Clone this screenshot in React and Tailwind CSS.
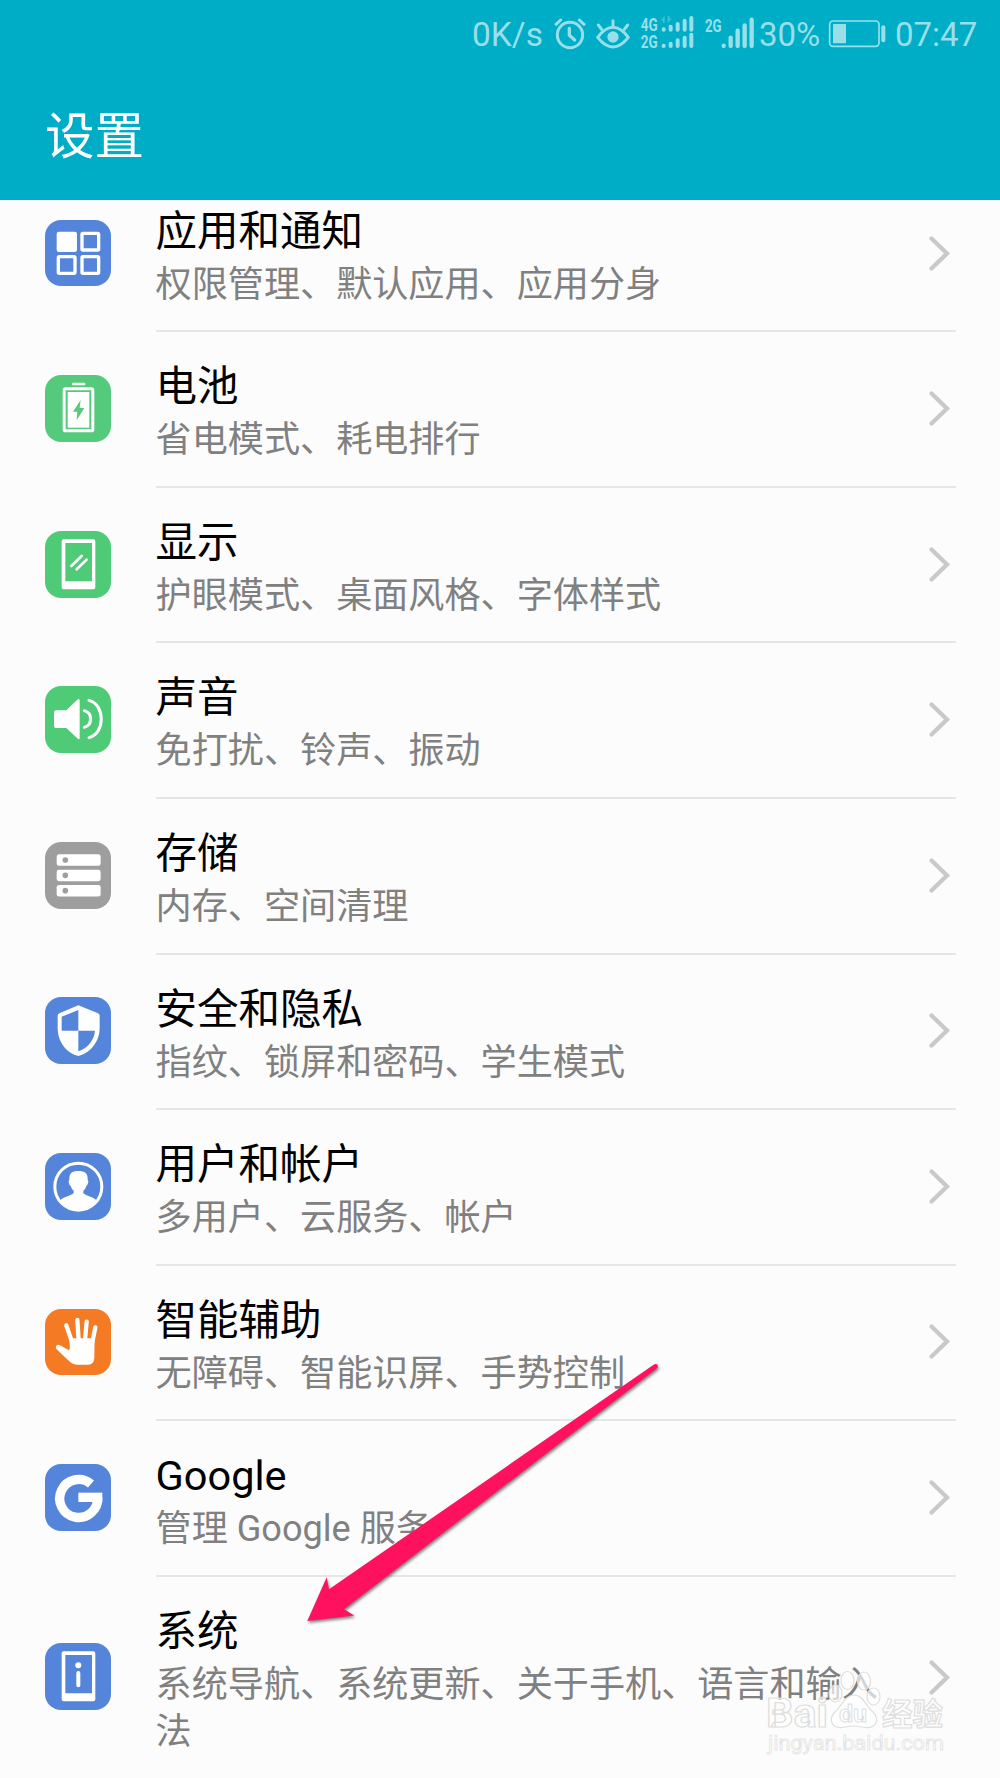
import { clsx } from 'clsx';

function AppsIcon() {
  return (
    <g fill="none" stroke="#fff" strokeWidth="10">
      <rect x="35" y="35" width="61" height="61" rx="7" fill="#fff" stroke="none" />
      <rect x="111" y="40" width="50" height="50" rx="3" />
      <rect x="40" y="110" width="50" height="50" rx="3" />
      <rect x="111" y="110" width="50" height="50" rx="3" />
    </g>
  );
}

function BatteryIcon() {
  return (
    <g>
      <rect x="81" y="23" width="40" height="8" rx="3" fill="#fff" />
      <rect x="57.5" y="41.5" width="86" height="126" rx="5" fill="none" stroke="#fff" strokeWidth="9" />
      <rect x="68" y="51" width="65" height="107" fill="#fff" />
      <path d="M107 75L84 110H97L95 136L118 99H104Z" fill="#56ca7c" />
    </g>
  );
}

function DisplayIcon() {
  return (
    <g>
      <path fill="#fff" fillRule="evenodd" d="M56 25H145Q151 25 151 31V169Q151 175 145 175H56Q50 175 50 169V31Q50 25 56 25ZM61 36V151H141V36Z" />
      <path d="M79 105L110 75M95 115L125 86" stroke="#fff" strokeWidth="8" strokeLinecap="round" />
    </g>
  );
}

function SoundIcon() {
  return (
    <g>
      <path fill="#fff" d="M33 73H64L97 41Q104 36 104 44V155Q104 163 97 157L64 126H33Q27 126 27 120V79Q27 73 33 73Z" />
      <path d="M118 74C143 81 143 117 118 124M132 43C181 56 181 142 132 155" fill="none" stroke="#fff" strokeWidth="9" strokeLinecap="round" />
    </g>
  );
}

function StorageIcon() {
  return (
    <g>
      {[37, 83, 129].map((y) => (
        <g key={y}>
          <rect x="35" y={y} width="132" height="34.5" rx="7" fill="#fff" />
          <circle cx="61" cy={y + 17} r="8.5" fill="#9e9e9e" />
        </g>
      ))}
    </g>
  );
}

function SecurityIcon() {
  return (
    <g>
      <path fill="#fff" d="M100 25L159 49Q164 51 164 56V93C164 134 136 168 100 177C64 168 38 134 38 93V56Q38 51 43 49Z" />
      <path fill="#5585db" d="M100 39V101H50V59ZM100 101H150C148 129 128 154 100 163Z" />
    </g>
  );
}

function UserIcon() {
  return (
    <g>
      <circle cx="100" cy="101" r="70.5" fill="none" stroke="#fff" strokeWidth="9" />
      <path fill="#fff" d="M100 54C119 54 129 60 128 80Q132 84 129 91Q127 98 124 99Q121 109 115 113V121Q119 125 130 129Q148 135 155 142Q136 172 100 174Q64 172 45 142Q52 135 70 129Q82 125 86 121V113Q80 109 77 99Q73 98 72 91Q69 84 73 80C72 60 82 54 100 54Z" />
    </g>
  );
}

function AssistIcon() {
  return (
    <g>
      <path d="M64 49L80 96M97 33L101 94M125 38L120 94M151 55L142 100" stroke="#fff" strokeWidth="13" strokeLinecap="round" />
      <path fill="#fff" d="M73 88H149L148 148Q147 167 129 167H96Q84 167 76 160L35 121Q30 115 34 110Q38 105 45 109L72 124Q76 117 74 104Z" />
    </g>
  );
}

function GoogleIcon() {
  return (
    <g fill="none" stroke="#fff" strokeWidth="28">
      <path d="M138 60A57 57 0 1 0 158 100" />
      <path d="M100 100H172" />
    </g>
  );
}

function SystemIcon() {
  return (
    <g fill="#fff">
      <path fillRule="evenodd" d="M56 25H145Q151 25 151 31V169Q151 175 145 175H56Q50 175 50 169V31Q50 25 56 25ZM61 36V151H141V36Z" />
      <circle cx="100" cy="67" r="9" />
      <rect x="94" y="84" width="12" height="49" rx="6" />
    </g>
  );
}

const items = [
  { title: '应用和通知', desc: '权限管理、默认应用、应用分身', icon: AppsIcon, color: 'bg-[#5585db]' },
  { title: '电池', desc: '省电模式、耗电排行', icon: BatteryIcon, color: 'bg-[#56ca7c]' },
  { title: '显示', desc: '护眼模式、桌面风格、字体样式', icon: DisplayIcon, color: 'bg-[#4fcb78]' },
  { title: '声音', desc: '免打扰、铃声、振动', icon: SoundIcon, color: 'bg-[#4fcb78]' },
  { title: '存储', desc: '内存、空间清理', icon: StorageIcon, color: 'bg-[#9e9e9e]' },
  { title: '安全和隐私', desc: '指纹、锁屏和密码、学生模式', icon: SecurityIcon, color: 'bg-[#5585db]' },
  { title: '用户和帐户', desc: '多用户、云服务、帐户', icon: UserIcon, color: 'bg-[#5585db]' },
  { title: '智能辅助', desc: '无障碍、智能识屏、手势控制', icon: AssistIcon, color: 'bg-[#f47b24]' },
  { title: 'Google', desc: '管理 Google 服务', icon: GoogleIcon, color: 'bg-[#5585db]' },
  { title: '系统', desc: '系统导航、系统更新、关于手机、语言和输入法', icon: SystemIcon, color: 'bg-[#5585db]' },
];

function StatusBar() {
  return (
    <div className="flex items-start h-9 pl-[472px] text-[33px] leading-[40px] text-[#99dfe9] whitespace-nowrap">
      <span className="w-[82px] text-[33.5px]">0K/s</span>
      <svg className="w-8 h-9" viewBox="282 45 96 108" fill="none" stroke="currentColor" strokeWidth="9" strokeLinecap="round">
        <circle cx="330" cy="105" r="38" />
        <path d="M288 73L302 60M372 73L358 60" />
        <path d="M328 85V106L344 120" strokeWidth="10" strokeLinejoin="round" />
      </svg>
      <svg className="w-[34px] h-9 ml-2.5" viewBox="408 45 102 108" fill="none" stroke="currentColor" strokeWidth="9" strokeLinecap="round">
        <path d="M413 112Q459 52 505 112Q459 170 413 112Z" strokeLinejoin="round" />
        <circle cx="459" cy="111" r="17" fill="currentColor" stroke="none" />
        <path d="M459 62V78M415 75L425 88M503 75L493 88" />
      </svg>
      <svg className="w-[55px] h-9 ml-2.5" viewBox="540 45 165 108" fill="currentColor">
        <text x="542" y="94" fontSize="54" fontWeight="700" textLength="51" lengthAdjust="spacingAndGlyphs">4G</text>
        <text x="542" y="143" fontSize="54" fontWeight="700" textLength="51" lengthAdjust="spacingAndGlyphs">2G</text>
        <path d="M602 62L614 47V69H609V62ZM623 47V69L636 56H629V47Z" opacity="0.4" />
        <g stroke="currentColor" strokeWidth="12" strokeLinecap="round">
          <path d="M611 88V89M632 80V89M653 72V89M674 62V89M694 54V89" />
          <path d="M611 137V138M632 131V138M653 121V138M674 113V138M694 104V138" />
        </g>
      </svg>
      <svg className="w-[51px] h-9 ml-[9px]" viewBox="42 45 153 108" fill="currentColor">
        <text x="45" y="95" fontSize="54" fontWeight="700" textLength="50" lengthAdjust="spacingAndGlyphs">2G</text>
        <path d="M101 137V138M122 113V138M143 92V138M164 76V138M185 59V138" stroke="currentColor" strokeWidth="13" strokeLinecap="round" />
      </svg>
      <span className="w-[69px] pl-1">30%</span>
      <svg className="w-[59px] h-9 ml-1" viewBox="414 45 177 108">
        <rect x="419" y="63" width="148" height="76" rx="10" fill="none" stroke="currentColor" strokeWidth="5" />
        <rect x="429" y="72" width="39" height="58" rx="2" fill="currentColor" />
        <path d="M580 82V121" stroke="currentColor" strokeWidth="12" strokeLinecap="round" />
      </svg>
      <span className="ml-2">07:47</span>
    </div>
  );
}

function SettingRow({ item, last }) {
  const Icon = item.icon;

  return (
    <div className={clsx('flex shrink-0 pl-[44.6px] pr-[44.4px]', last ? 'h-[203px]' : 'h-[155.56px]')}>
      <div className="flex items-center w-[111px] shrink-0 pb-[3px]">
        <div className={clsx('w-[66.67px] h-[66.67px] rounded-[16px]', item.color)}>
          <svg viewBox="0 0 200 200" className="w-full h-full">
            <Icon />
          </svg>
        </div>
      </div>
      <div className={clsx('flex flex-1 min-w-0', !last && 'border-b-2 border-[#e6e6e6]')}>
        <div className="w-[730px] shrink-0 pt-[26px]">
          <p className="text-[41.5px] leading-[58px] text-black">{item.title}</p>
          <p className="text-[36.11px] leading-[47.4px] text-[#808080]">{item.desc}</p>
        </div>
        <div className="flex flex-1 items-center justify-end pr-[5px]">
          <svg className="w-6 h-10" viewBox="0 0 24 40" fill="none" stroke="#c9c9c9" strokeWidth="4.3">
            <path d="M4.500 4.500L20 19.500L4.500 34.500" strokeLinecap="round" />
          </svg>
        </div>
      </div>
    </div>
  );
}

function Arrow() {
  return (
    <svg className="absolute left-[297px] top-[1354px] w-[370px] h-[280px] drop-shadow-[1px_2px_1.5px_rgba(0,0,0,0.5)]" viewBox="297 1354 370 280">
      <path fill="#ff1160" d="M307.3 1621L326.7 1577.3L329 1589.3L654 1364.5Q657 1363 658 1366Q658 1368 656 1369L344 1609.3L354.3 1615.5Z" />
    </svg>
  );
}

function Watermark() {
  return (
    <svg
      className="absolute left-[760px] top-[1665px] w-[190px] h-[95px]"
      viewBox="760 1665 190 95"
      fill="#fff"
      fillOpacity="0.65"
      stroke="#dedede"
      strokeWidth="1.2"
    >
      <text x="766" y="1727" fontSize="41" fontWeight="700" textLength="62" lengthAdjust="spacingAndGlyphs">Bai</text>
      <ellipse cx="835.5" cy="1693.5" rx="6.5" ry="8.5" />
      <ellipse cx="847.5" cy="1680.5" rx="6.5" ry="9" />
      <ellipse cx="864" cy="1681" rx="6.5" ry="9" />
      <ellipse cx="873.5" cy="1696.5" rx="6.5" ry="8.5" />
      <path d="M854 1695C863 1695 866 1706 872 1711C881 1720 876 1730 862 1727Q854 1725 845 1727C831 1730 828 1719 835 1712C842 1706 845 1695 854 1695Z" />
      <text x="839" y="1722" fontSize="23" fontWeight="700" strokeWidth="0.9" textLength="28" lengthAdjust="spacingAndGlyphs">du</text>
      <text x="882" y="1725" fontSize="31" fontWeight="700" textLength="61" lengthAdjust="spacingAndGlyphs">经验</text>
      <text x="768" y="1750" fontSize="21" stroke="#e4e4e4" strokeWidth="0.8" textLength="176" lengthAdjust="spacingAndGlyphs">jingyan.baidu.com</text>
    </svg>
  );
}

export default function App() {
  return (
    <div className="relative flex flex-col w-[1000px] h-[1778px] overflow-hidden bg-[#fcfcfc] font-[Roboto,'Noto_Sans_CJK_SC',sans-serif]" lang="zh-CN">
      <header className="relative z-10 h-[200px] shrink-0 pt-[15px] bg-[#00adc6]">
        <StatusBar />
        <h1 className="mt-[51px] pl-[45px] text-[49.5px] leading-[70px] text-white">设置</h1>
      </header>
      <main className="flex flex-col mt-[-23.2px]">
        {items.map((item, i) => (
          <SettingRow key={item.title} item={item} last={i === items.length - 1} />
        ))}
      </main>
      <Arrow />
      <Watermark />
    </div>
  );
}
